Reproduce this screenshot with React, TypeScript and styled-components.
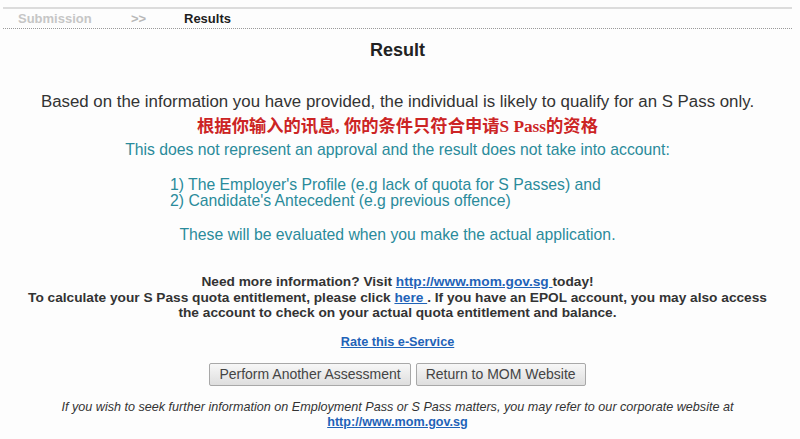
import React from "react";
import styled, { createGlobalStyle } from "styled-components";

const Global = createGlobalStyle`
  html, body { margin: 0; padding: 0; background: #fdfdfd; }
  body { font-family: "Liberation Sans", Arial, sans-serif; color: #333; }
`;

const Page = styled.div`
  padding: 7px 8px 0 3px;
  width: 800px;
  height: 439px;
  box-sizing: border-box;
  overflow: hidden;
`;

const TopRule = styled.div`
  border-top: 2px solid #dcdcdc;
`;

const Breadcrumb = styled.div`
  display: flex;
  align-items: center;
  height: 19px;
  padding-left: 15px;
  border-bottom: 1px dotted #9a9a9a;
  font-size: 13px;
  font-weight: bold;
`;

const Crumb = styled.span<{ $w?: number; $tone: string }>`
  width: ${(p) => (p.$w ? `${p.$w}px` : "auto")};
  color: ${(p) => p.$tone};
`;

const Heading = styled.h1`
  margin: 10px 0 0;
  text-align: center;
  font-size: 18px;
  line-height: 22px;
  color: #222;
`;

const Content = styled.div`
  display: flex;
  flex-direction: column;
  align-items: center;
  text-align: center;
`;

const Lead = styled.p`
  margin: 32px 0 0;
  font-size: 16.85px;
  line-height: 18px;
  color: #333;
`;

const Chinese = styled.p`
  margin: 5px 0 0;
  font-family: "Liberation Serif", "Noto Sans CJK SC", serif;
  font-weight: bold;
  font-size: 17.3px;
  line-height: 22px;
  color: #cc2424;
`;

const Teal = styled.p<{ $top: number }>`
  margin: ${(p) => p.$top}px 0 0;
  font-size: 15.75px;
  line-height: 18px;
  color: #2a8b9b;
`;

const List = styled.div`
  margin: 18px 0 0;
  align-self: flex-start;
  padding-left: 167px;
  text-align: left;
  font-size: 15.75px;
  line-height: 16px;
  color: #2a8b9b;
`;

const Info = styled.p`
  margin: 30px 0 0;
  font-size: 13.7px;
  font-weight: bold;
  line-height: 15.5px;
  color: #333;
`;

const Link = styled.a`
  color: #1f63b8;
  text-decoration: underline;
`;

const Rate = styled.a`
  display: block;
  margin: 13px 0 0;
  font-size: 12.7px;
  font-weight: bold;
  line-height: 16px;
  color: #1f63b8;
  text-decoration: underline;
`;

const Buttons = styled.div`
  display: flex;
  gap: 5px;
  margin: 13px 0 0;
`;

const Button = styled.button`
  height: 23px;
  padding: 0 9px;
  font-family: "Liberation Sans", Arial, sans-serif;
  font-size: 14px;
  color: #444;
  background: linear-gradient(#f7f7f7, #dedede);
  border: 1px solid #a8a8a8;
  border-radius: 2px;
`;

const Footer = styled.p`
  margin: 14px 0 0;
  font-size: 12.6px;
  font-style: italic;
  line-height: 15px;
  color: #333;
`;

const FooterLink = styled(Link)`
  font-style: normal;
  font-weight: bold;
`;

export default function App() {
  return (
    <>
      <Global />
      <Page>
        <TopRule />
        <Breadcrumb>
          <Crumb $w={113} $tone="#c6c6c6">Submission</Crumb>
          <Crumb $w={53} $tone="#b8b8b8">&gt;&gt;</Crumb>
          <Crumb $tone="#1e1e1e">Results</Crumb>
        </Breadcrumb>
        <Heading>Result</Heading>
        <Content>
          <Lead>
            Based on the information you have provided, the individual is likely to qualify for an S Pass only.
          </Lead>
          <Chinese>根据你输入的讯息, 你的条件只符合申请S Pass的资格</Chinese>
          <Teal $top={3}>
            This does not represent an approval and the result does not take into account:
          </Teal>
          <List>
            1) The Employer's Profile (e.g lack of quota for S Passes) and
            <br />
            2) Candidate's Antecedent (e.g previous offence)
          </List>
          <Teal $top={17}>These will be evaluated when you make the actual application.</Teal>
          <Info>
            Need more information? Visit <Link href="#">http://www.mom.gov.sg </Link>today!
            <br />
            To calculate your S Pass quota entitlement, please click <Link href="#">here </Link>. If you
            have an EPOL account, you may also access
            <br />
            the account to check on your actual quota entitlement and balance.
          </Info>
          <Rate href="#">Rate this e-Service</Rate>
          <Buttons>
            <Button>Perform Another Assessment</Button>
            <Button>Return to MOM Website</Button>
          </Buttons>
          <Footer>
            If you wish to seek further information on Employment Pass or S Pass matters, you may refer to our
            corporate website at
            <br />
            <FooterLink href="#">http://www.mom.gov.sg</FooterLink>
          </Footer>
        </Content>
      </Page>
    </>
  );
}
